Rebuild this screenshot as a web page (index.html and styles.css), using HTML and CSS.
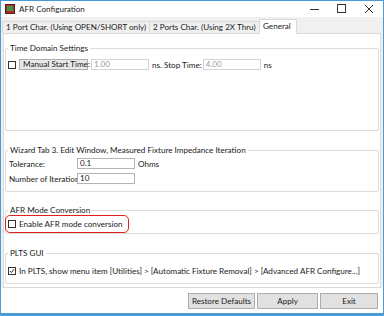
FILE: index.html
```html
<!DOCTYPE html>
<html lang="en">
<head>
    <meta charset="UTF-8">
    <title>AFR Configuration</title>
    <link rel="stylesheet" href="styles.css">
</head>
<body>
    <div class="window">
        <div class="titlebar">
            <svg class="app-icon" width="10" height="10" viewBox="0 0 10 10">
                <rect x="0.5" y="0.5" width="9" height="9" fill="#b52a24" stroke="#5a1a16"/>
                <rect x="2" y="2" width="6" height="5" fill="#3a9a48"/>
            </svg>
            <span class="title">AFR Configuration</span>
            <div class="controls">
                <svg width="10" height="10" viewBox="0 0 10 10"><line x1="0" y1="5.5" x2="9" y2="5.5" stroke="#333"/></svg>
                <svg width="10" height="10" viewBox="0 0 10 10"><rect x="0.5" y="0.5" width="8" height="8" fill="none" stroke="#333"/></svg>
                <svg width="10" height="10" viewBox="0 0 10 10"><path d="M1 1 L9 9 M9 1 L1 9" stroke="#333"/></svg>
            </div>
        </div>

        <div class="tabs">
            <div class="tab tab-1">1 Port Char. (Using OPEN/SHORT only)</div>
            <div class="tab tab-2">2 Ports Char. (Using 2X Thru)</div>
            <div class="tab active">General</div>
        </div>

        <div class="page">
            <div class="group g-time">
                <span class="legend">Time Domain Settings</span>
                <div class="row">
                    <span class="check"></span>
                    <span class="btn-label">Manual Start Time:</span>
                    <span class="field disabled">1.00</span>
                    <span class="unit">ns. Stop Time:</span>
                    <span class="field disabled">4.00</span>
                    <span class="unit">ns</span>
                </div>
            </div>

            <div class="group g-wizard">
                <span class="legend">Wizard Tab 3. Edit Window, Measured Fixture Impedance Iteration</span>
                <div class="row">
                    <span class="label">Tolerance:</span>
                    <span class="field">0.1</span>
                    <span class="unit">Ohms</span>
                </div>
                <div class="row">
                    <span class="label">Number of Iterations</span>
                    <span class="field">10</span>
                </div>
            </div>

            <div class="group g-mode">
                <span class="legend">AFR Mode Conversion</span>
                <div class="row">
                    <span class="check"></span>
                    <span class="text">Enable AFR mode conversion</span>
                </div>
                <div class="highlight"></div>
            </div>

            <div class="group g-plts">
                <span class="legend">PLTS GUI</span>
                <div class="row">
                    <span class="check checked">
                        <svg width="8" height="8" viewBox="0 0 8 8"><path d="M1.2 4 L3.2 6 L6.8 1.6" fill="none" stroke="#222" stroke-width="1.3"/></svg>
                    </span>
                    <span class="text">In PLTS, show menu item [Utilities] &gt; [Automatic Fixture Removal] &gt; [Advanced AFR Configure...]</span>
                </div>
            </div>
        </div>

        <div class="footer">
            <button class="btn btn-restore">Restore Defaults</button>
            <button class="btn btn-apply">Apply</button>
            <button class="btn btn-exit">Exit</button>
        </div>
    </div>
</body>
</html>
```

FILE: styles.css
```css
body {
    margin: 0;
    padding: 0;
    background-color: #ffffff;
    font-family: Lato, "Open Sans", sans-serif;
    font-size: 8.1px;
    color: #1a1a1a;
}

.window {
    box-sizing: border-box;
    width: 384px;
    height: 316px;
    border: 1px solid #4a9ad8;
    border-bottom-width: 3px;
    background-color: #f0f0f0;
    display: flex;
    flex-direction: column;
}

.titlebar {
    height: 16px;
    background-color: #ffffff;
    display: flex;
    align-items: center;
    padding-left: 4px;
}

.app-icon {
    display: block;
    margin-right: 4px;
}

.controls {
    margin-left: auto;
    display: flex;
    gap: 17px;
    padding-right: 9px;
}

.controls svg {
    display: block;
}

.tabs {
    height: 16px;
    display: flex;
    align-items: flex-end;
    padding-left: 1px;
}

.tab {
    box-sizing: border-box;
    height: 12px;
    line-height: 11px;
    padding: 0 3px;
    border: 1px solid #d9d9d9;
    border-bottom: none;
    background-color: #f0f0f0;
    margin-right: -1px;
    white-space: nowrap;
}

.tab-1 {
    width: 148px;
}

.tab-2 {
    width: 111px;
}

.tab.active {
    height: 15px;
    width: 38px;
    background-color: #ffffff;
    line-height: 13px;
    position: relative;
    z-index: 1;
    margin-bottom: -1px;
}

.page {
    box-sizing: border-box;
    height: 255px;
    margin: 0 2px;
    border: 1px solid #d9d9d9;
    background-color: #ffffff;
    padding: 0 1px;
}

.group {
    box-sizing: border-box;
    position: relative;
    border: 1px solid #dcdcdc;
    border-radius: 2px;
}

.legend {
    position: absolute;
    top: -6px;
    left: 2px;
    padding: 0 2px;
    line-height: 11px;
    background-color: #ffffff;
    white-space: nowrap;
}

.row {
    display: flex;
    align-items: center;
    height: 11px;
    white-space: nowrap;
}

.g-time {
    margin-top: 14px;
    height: 83px;
    padding: 10px 0 0 2px;
}

.g-wizard {
    margin-top: 19px;
    height: 42px;
    padding: 7px 0 0 3px;
    display: flex;
    flex-direction: column;
    gap: 4px;
}

.g-mode {
    margin-top: 18px;
    height: 24px;
    padding: 7px 0 0 2px;
}

.g-plts {
    margin-top: 19px;
    height: 31px;
    padding: 11px 0 0 2px;
}

.check {
    box-sizing: border-box;
    width: 8px;
    height: 8px;
    border: 1px solid #333333;
    background-color: #ffffff;
    margin-right: 3px;
    display: flex;
    align-items: center;
    justify-content: center;
}

.check svg {
    display: block;
}

.btn-label {
    box-sizing: border-box;
    height: 11px;
    width: 69px;
    line-height: 9px;
    padding-left: 3px;
    border: 1px solid #adadad;
    background-color: #e8e8e8;
    margin-right: 3px;
}

.field {
    box-sizing: border-box;
    width: 58px;
    height: 11px;
    line-height: 9px;
    padding-left: 2px;
    border: 1px solid #b4b4b4;
    background-color: #ffffff;
}

.field.disabled {
    border-color: #d4d4d4;
    color: #9a9a9a;
}

.unit {
    margin-left: 3px;
    margin-right: 1px;
}

.label {
    width: 68px;
    overflow: hidden;
}

.highlight {
    position: absolute;
    left: -1px;
    top: 4px;
    width: 124px;
    height: 18px;
    box-sizing: border-box;
    border: 1px solid #e0221c;
    border-radius: 5px;
}

.footer {
    flex: 1;
    display: flex;
    justify-content: flex-end;
    align-items: flex-start;
    gap: 2px;
    padding: 5px 5px 0 0;
    background-color: #ffffff;
}

.btn {
    box-sizing: border-box;
    height: 16px;
    border: 1px solid #adadad;
    background-color: #e1e1e1;
    font-family: inherit;
    font-size: 8.1px;
    color: #1a1a1a;
    padding: 0;
    margin: 0;
}

.btn-restore {
    width: 67px;
}

.btn-apply {
    width: 61px;
}

.btn-exit {
    width: 58px;
}
```
